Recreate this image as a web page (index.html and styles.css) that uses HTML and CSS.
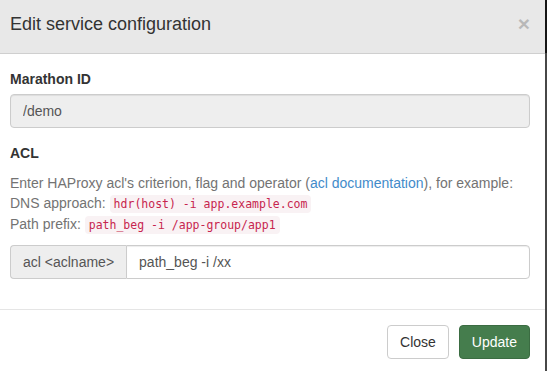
FILE: index.html
```html
<!DOCTYPE html>
<html lang="en">
<head>
  <meta charset="UTF-8" />
  <meta name="viewport" content="width=device-width, initial-scale=1.0" />
  <title>Edit service configuration</title>
  <link rel="stylesheet" href="styles.css">
</head>
<body>
  <div class="modal">
    <div class="modal-header">
      <h4 class="modal-title">Edit service configuration</h4>
      <button type="button" class="close">&times;</button>
    </div>

    <div class="modal-body">
      <div class="form-group">
        <label>Marathon ID</label>
        <input class="form-control" type="text" value="/demo" readonly>
      </div>

      <div class="form-group">
        <label>ACL</label>
        <p class="help-block">
          Enter HAProxy acl's criterion, flag and operator (<a href="#">acl documentation</a>), for example:<br>
          DNS approach: <code>hdr(host) -i app.example.com</code><br>
          Path prefix: <code>path_beg -i /app-group/app1</code>
        </p>
        <div class="input-group">
          <span class="input-group-addon">acl &lt;aclname&gt;</span>
          <input class="form-control" type="text" value="path_beg -i /xx">
        </div>
      </div>
    </div>

    <div class="modal-footer">
      <button type="button" class="btn btn-default">Close</button>
      <button type="button" class="btn btn-success">Update</button>
    </div>
  </div>
</body>
</html>
```

FILE: styles.css
```css
* {
  box-sizing: border-box;
}
body {
  margin: 0;
  font-family: 'Liberation Sans', Arial, sans-serif;
  font-size: 14px;
  line-height: 20px;
  color: #333;
  background: linear-gradient(to bottom, #151515 0, #151515 53px, #474747 53px);
  overflow: hidden;
}
.modal {
  width: 545px;
  background-color: #fff;
}
.modal-header {
  display: flex;
  justify-content: space-between;
  align-items: flex-start;
  padding: 14px 15px 19px 10px;
  background-color: #e8e8e8;
  border-bottom: 1px solid #cfcfcf;
}
.modal-title {
  margin: 0;
  font-size: 18px;
  font-weight: normal;
  line-height: 20px;
}
.close {
  margin: 0;
  padding: 0;
  border: 0;
  background: none;
  font-family: 'Liberation Sans', Arial, sans-serif;
  font-size: 21px;
  font-weight: bold;
  line-height: 20px;
  color: #000;
  opacity: 0.2;
  cursor: pointer;
}
.modal-body {
  padding: 15px 15px 15px 10px;
}
.form-group {
  margin-bottom: 15px;
}
label {
  display: inline-block;
  max-width: 100%;
  margin-bottom: 5px;
  font-weight: bold;
}
.form-control {
  display: block;
  width: 100%;
  height: 34px;
  padding: 6px 12px;
  font-family: inherit;
  font-size: 14px;
  line-height: 20px;
  color: #555;
  background-color: #fff;
  border: 1px solid #ccc;
  border-radius: 4px;
  box-shadow: inset 0 1px 1px rgba(0,0,0,0.075);
}
.form-control[readonly] {
  background-color: #eee;
}
.help-block {
  margin: 5px 0 10px;
  color: #737373;
}
.help-block a {
  color: #428bca;
  text-decoration: none;
}
code {
  padding: 2px 4px;
  font-family: 'DejaVu Sans Mono', Consolas, monospace;
  font-size: 11.5px;
  color: #c7254e;
  background-color: #f9f2f4;
  border-radius: 4px;
}
.input-group {
  display: flex;
}
.input-group-addon {
  padding: 6px 12px;
  font-size: 14px;
  line-height: 20px;
  color: #555;
  white-space: nowrap;
  background-color: #eee;
  border: 1px solid #ccc;
  border-right: 0;
  border-radius: 4px 0 0 4px;
}
.input-group .form-control {
  flex: 1;
  border-radius: 0 4px 4px 0;
}
.modal-footer {
  display: flex;
  justify-content: flex-end;
  gap: 10px;
  padding: 15px;
  border-top: 1px solid #e5e5e5;
}
.btn {
  padding: 6px 12px;
  font-family: inherit;
  font-size: 14px;
  line-height: 20px;
  border: 1px solid transparent;
  border-radius: 4px;
  cursor: pointer;
}
.btn-default {
  color: #333;
  background-color: #fff;
  border-color: #ccc;
}
.btn-success {
  color: #fff;
  background-color: #457d4d;
  border-color: #3b6c42;
}
```
